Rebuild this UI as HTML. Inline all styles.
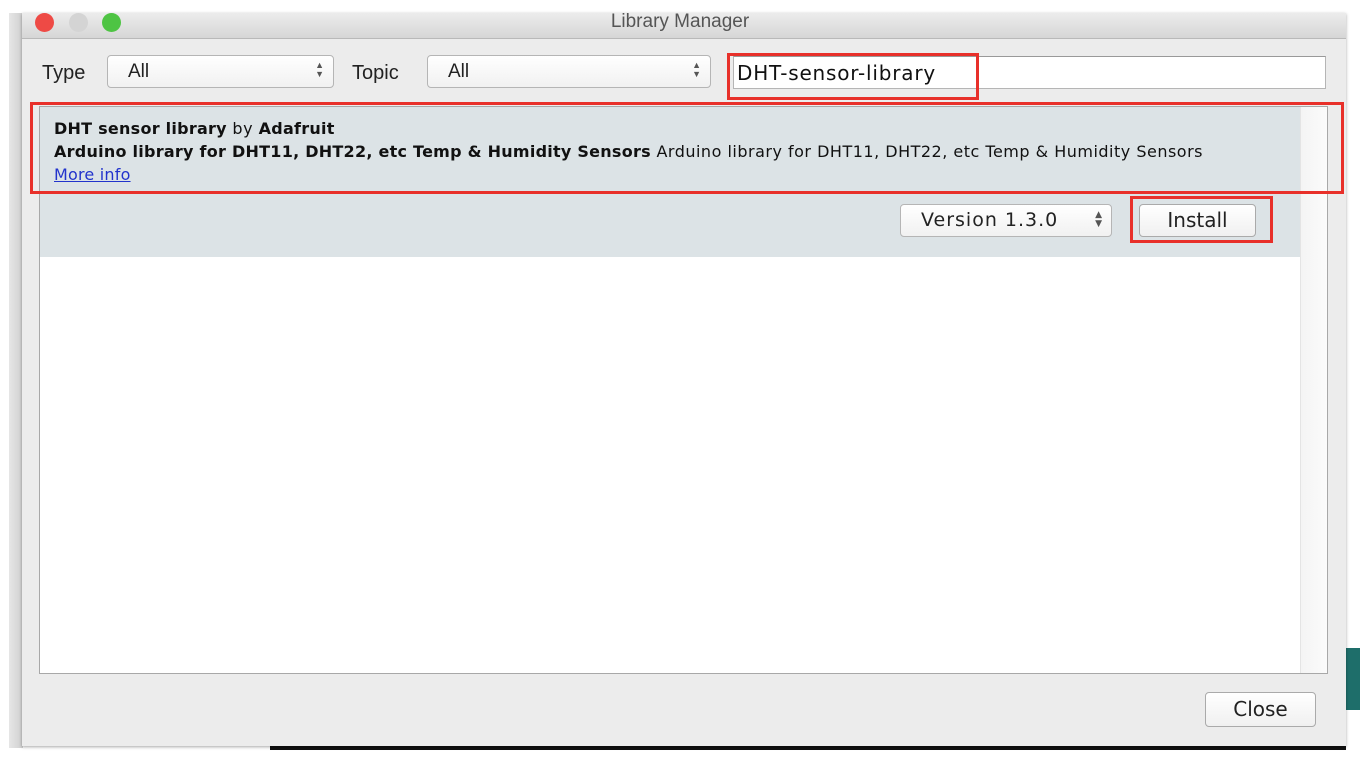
<!DOCTYPE html>
<html><head><style>
body{margin:0;width:1360px;height:766px;background:#fff;position:relative;overflow:hidden;font-family:"Liberation Sans",sans-serif;}
.a{position:absolute;box-sizing:border-box;}
.sel{background:linear-gradient(#fff,#f1f1f1);border:1px solid #b5b5b5;border-radius:4px;font-size:19px;color:#222;padding:5px 0 0 20px;}
.arr{position:absolute;right:9px;top:5px;font-size:9px;line-height:9px;color:#555;}
.btn{background:linear-gradient(#fff,#f0f0f0);border:1px solid #aaa;border-radius:4px;font-size:20px;color:#222;text-align:center;font-family:"DejaVu Sans",sans-serif;}
.red{border:3px solid #e8302a;}
b{letter-spacing:0.25px;}
</style></head><body>
<div class="a" style="left:9px;top:13px;width:14px;height:735px;background:linear-gradient(90deg,#e6e6e6,#cfcfcf);"></div>
<div class="a" style="left:270px;top:745px;width:1076px;height:5px;background:#111;"></div>
<div class="a" style="left:1346px;top:648px;width:14px;height:62px;background:#1e6e6a;"></div>
<div class="a" style="left:22px;top:13px;width:1324px;height:733px;background:#ececec;box-shadow:0 1px 3px rgba(0,0,0,.35);"></div>
<div class="a" style="left:22px;top:13px;width:1324px;height:26px;background:linear-gradient(#ececec,#d6d6d6);border-bottom:1px solid #b9b9b9;"></div>
<div class="a" style="left:35px;top:13px;width:19px;height:19px;border-radius:50%;background:#ee4a45;"></div>
<div class="a" style="left:69px;top:13px;width:19px;height:19px;border-radius:50%;background:#d4d4d4;"></div>
<div class="a" style="left:102px;top:13px;width:19px;height:19px;border-radius:50%;background:#4ec443;"></div>
<div class="a" style="left:0;top:11px;width:1360px;text-align:center;font-size:19px;color:#555;">Library Manager</div>

<div class="a" style="left:42px;top:62px;font-size:20px;color:#222;">Type</div>
<div class="a sel" style="left:107px;top:55px;width:227px;height:33px;">All<div class="arr">▲<br>▼</div></div>
<div class="a" style="left:352px;top:62px;font-size:20px;color:#222;">Topic</div>
<div class="a sel" style="left:427px;top:55px;width:284px;height:33px;">All<div class="arr">▲<br>▼</div></div>
<div class="a" style="left:733px;top:56px;width:593px;height:33px;background:#fff;border:1px solid #b5b5b5;border-top-color:#999;font-size:20px;letter-spacing:0.8px;color:#111;padding:4px 0 0 3px;font-family:'DejaVu Sans',sans-serif;">DHT-sensor-library</div>
<div class="a red" style="left:727px;top:53px;width:252px;height:47px;"></div>

<div class="a" style="left:39px;top:106px;width:1289px;height:568px;background:#fff;border:1px solid #a8a8a8;"></div>
<div class="a" style="left:1300px;top:107px;width:27px;height:566px;background:linear-gradient(90deg,#f4f4f4,#fbfbfb);border-left:1px solid #e4e4e4;"></div>
<div class="a" style="left:40px;top:107px;width:1260px;height:150px;background:#dce3e6;"></div>
<div class="a" style="left:54px;top:117px;font-size:16px;color:#111;line-height:23px;font-family:'DejaVu Sans',sans-serif;white-space:nowrap;letter-spacing:0.5px;"><b>DHT sensor library</b> by <b>Adafruit</b><br><b>Arduino library for DHT11, DHT22, etc Temp &amp; Humidity Sensors</b> Arduino library for DHT11, DHT22, etc Temp &amp; Humidity Sensors<br><span style="color:#2233cc;text-decoration:underline;letter-spacing:0.2px;">More info</span></div>
<div class="a red" style="left:30px;top:102px;width:1314px;height:92px;"></div>

<div class="a sel" style="left:900px;top:204px;width:212px;height:33px;font-size:19px;letter-spacing:1px;font-family:'DejaVu Sans',sans-serif;padding-top:4px;">Version 1.3.0<div class="arr" style="top:6px;letter-spacing:0">▲<br>▼</div></div>
<div class="a btn" style="left:1139px;top:204px;width:117px;height:33px;line-height:31px;">Install</div>
<div class="a red" style="left:1130px;top:196px;width:143px;height:47px;"></div>

<div class="a btn" style="left:1205px;top:692px;width:111px;height:35px;line-height:33px;">Close</div>
</body></html>
